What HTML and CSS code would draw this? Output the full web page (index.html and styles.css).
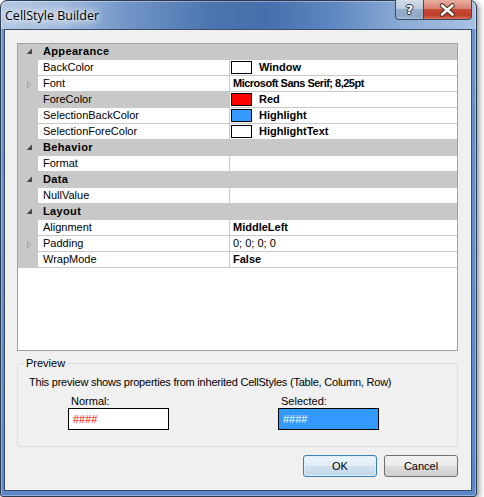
FILE: index.html
```html
<!DOCTYPE html>
<html>
<head>
<meta charset="utf-8">
<title>CellStyle Builder</title>
<link rel="stylesheet" href="styles.css">
</head>
<body>
<div class="window">
  <div class="titlebar">
    <span class="title">CellStyle Builder</span>
    <div class="caption-buttons">
      <div class="cap-btn help">?</div>
      <div class="cap-btn close">
        <svg width="47" height="18" viewBox="0 0 47 18">
          <path d="M18 4.5 L28.5 13.5 M28.5 4.5 L18 13.5" stroke="#4a2a22" stroke-width="4.6" stroke-linecap="round"/>
          <path d="M18 4.5 L28.5 13.5 M28.5 4.5 L18 13.5" stroke="#ffffff" stroke-width="2.6" stroke-linecap="round"/>
        </svg>
      </div>
    </div>
  </div>
  <div class="client">
    <div class="grid">
      <div class="row cat"><span class="gutter"><svg class="glyph" width="20" height="15" viewBox="0 0 20 15"><polygon points="14,4.5 14,10 8.5,10" fill="#4a4a4a"/></svg></span><span class="cat-name">Appearance</span></div>
      <div class="row"><span class="gutter"></span><span class="name">BackColor</span><span class="value swatched"><span class="swatch sw-white"></span><b>Window</b></span></div>
      <div class="row"><span class="gutter"><svg class="glyph" width="20" height="15" viewBox="0 0 20 15"><polygon points="9.5,5.5 13,9 9.5,12.5" fill="none" stroke="#a6a6a6"/></svg></span><span class="name">Font</span><span class="value narrow"><b>Microsoft Sans Serif; 8,25pt</b></span></div>
      <div class="row"><span class="gutter"></span><span class="name selected-name">ForeColor</span><span class="value swatched"><span class="swatch sw-red"></span><b>Red</b></span></div>
      <div class="row"><span class="gutter"></span><span class="name">SelectionBackColor</span><span class="value swatched"><span class="swatch sw-blue"></span><b>Highlight</b></span></div>
      <div class="row"><span class="gutter"></span><span class="name">SelectionForeColor</span><span class="value swatched"><span class="swatch sw-white"></span><b>HighlightText</b></span></div>
      <div class="row cat"><span class="gutter"><svg class="glyph" width="20" height="15" viewBox="0 0 20 15"><polygon points="14,4.5 14,10 8.5,10" fill="#4a4a4a"/></svg></span><span class="cat-name">Behavior</span></div>
      <div class="row"><span class="gutter"></span><span class="name">Format</span><span class="value"></span></div>
      <div class="row cat"><span class="gutter"><svg class="glyph" width="20" height="15" viewBox="0 0 20 15"><polygon points="14,4.5 14,10 8.5,10" fill="#4a4a4a"/></svg></span><span class="cat-name">Data</span></div>
      <div class="row"><span class="gutter"></span><span class="name">NullValue</span><span class="value"></span></div>
      <div class="row cat"><span class="gutter"><svg class="glyph" width="20" height="15" viewBox="0 0 20 15"><polygon points="14,4.5 14,10 8.5,10" fill="#4a4a4a"/></svg></span><span class="cat-name">Layout</span></div>
      <div class="row"><span class="gutter"></span><span class="name">Alignment</span><span class="value"><b>MiddleLeft</b></span></div>
      <div class="row"><span class="gutter"><svg class="glyph" width="20" height="15" viewBox="0 0 20 15"><polygon points="9.5,5.5 13,9 9.5,12.5" fill="none" stroke="#a6a6a6"/></svg></span><span class="name">Padding</span><span class="value">0; 0; 0; 0</span></div>
      <div class="row"><span class="gutter"></span><span class="name">WrapMode</span><span class="value"><b>False</b></span></div>
    </div>
    <fieldset class="preview">
      <legend>Preview</legend>
      <p class="note">This preview shows properties from inherited CellStyles (Table, Column, Row)</p>
      <div class="samples">
        <div class="sample">
          <div class="sample-label">Normal:</div>
          <div class="sample-box normal">####</div>
        </div>
        <div class="sample">
          <div class="sample-label">Selected:</div>
          <div class="sample-box selected">####</div>
        </div>
      </div>
    </fieldset>
    <div class="buttons">
      <button class="btn default">OK</button>
      <button class="btn">Cancel</button>
    </div>
  </div>
</div>
</body>
</html>
```
FILE: styles.css
```css
* { box-sizing: border-box; }
html, body { margin: 0; padding: 0; background: #ffffff; }
body {
  width: 484px;
  height: 497px;
  overflow: hidden;
  font-family: "Liberation Sans", Arial, sans-serif;
  font-size: 11px;
  color: #000;
}
.window {
  width: 477px;
  height: 497px;
  display: flex;
  flex-direction: column;
  border: 1px solid #2c3b50;
  border-radius: 7px 7px 3px 3px;
  padding: 0 4px 5px 3px;
  background:
    linear-gradient(to right, #b3c8e4 0%, #a3bcdd 12%, #7396c8 26%, #4c75af 44%, #466fab 56%, #5f87c1 70%, #8eacd6 85%, #a9c1e2 100%) 0 0 / 100% 28px no-repeat,
    linear-gradient(to bottom, #6b94ce, #5b87c9);
  box-shadow: 2px 2px 6px rgba(0,0,0,0.45), inset 0 0 0 1px rgba(255,255,255,0.35);
}
.titlebar {
  flex: none;
  height: 28px;
  display: flex;
}
.title {
  align-self: center;
  padding-left: 1px;
  margin-top: 1px;
  font-family: "Open Sans", "Noto Sans", sans-serif;
  font-size: 12.5px;
  color: #000;
  text-shadow: 0 0 5px #fff, 0 0 8px #fff, 0 0 12px rgba(255,255,255,0.9);
}
.caption-buttons {
  margin-left: auto;
  margin-top: -1px;
  display: flex;
  height: 20px;
}
.cap-btn {
  height: 20px;
  border: 1px solid #3a4a62;
  border-top: none;
  display: flex;
  align-items: center;
  justify-content: center;
}
.help {
  width: 28px;
  border-right: none;
  border-bottom-left-radius: 4px;
  background: linear-gradient(to bottom, #d3dde9 0%, #bccbde 45%, #98afcc 50%, #8ea8c8 85%, #a9bfdb 100%);
  color: #fff;
  font-family: "DejaVu Sans", sans-serif;
  font-weight: bold;
  font-size: 13px;
  text-shadow: 0 0 1px #1e2a3a, 1px 0 0 #2a3850, -1px 0 0 #2a3850, 0 1px 0 #2a3850, 0 -1px 0 #2a3850;
}
.close {
  width: 49px;
  border-bottom-right-radius: 4px;
  background: linear-gradient(to bottom, #e8b0a2 0%, #d98170 45%, #c64a36 50%, #c03c28 80%, #d9735c 100%);
}
.client {
  flex: 1;
  display: flex;
  flex-direction: column;
  border: 1px solid #3b4e68;
  background: #f0f0f0;
  padding: 13px 13px 0 12px;
}
.grid {
  flex: none;
  width: 441px;
  height: 308px;
  border: 1px solid #a0a0a0;
  background: #fff;
}
.row {
  display: grid;
  grid-template-columns: 20px 192px 227px;
  height: 16px;
  line-height: 15px;
  border-bottom: 1px solid #c8c8c8;
  white-space: nowrap;
}
.row.cat {
  grid-template-columns: 20px 1fr;
  background: #c8c8c8;
}
.gutter {
  background: #c8c8c8;
  height: 15px;
}
.glyph { display: block; }
.cat-name {
  font-weight: bold;
  padding-left: 5px;
  letter-spacing: 0.35px;
}
.name {
  padding-left: 5px;
  border-right: 1px solid #c8c8c8;
}
.selected-name { background: #c8c8c8; }
.value {
  padding-left: 3px;
  overflow: hidden;
}
.value.narrow { letter-spacing: -0.5px; }
.value.swatched {
  display: flex;
  align-items: center;
  padding-left: 1px;
}
.swatch {
  width: 21px;
  height: 13px;
  border: 1px solid #000;
  margin-right: 7px;
  flex: none;
}
.sw-white { background: #fff; }
.sw-red { background: #ff0000; }
.sw-blue { background: #3399ff; }
.preview {
  margin: 6px 0 0 0;
  width: 441px;
  min-width: 0;
  padding: 0 0 16px 0;
  border: 1px solid #d5dfe5;
  border-radius: 3px;
}
.preview legend {
  margin-left: 6px;
  padding: 0 2px;
  line-height: 13px;
}
.note {
  margin: 6px 0 0 11px;
  line-height: 13px;
  white-space: nowrap;
  letter-spacing: -0.22px;
}
.samples {
  display: flex;
  gap: 109px;
  margin: 6px 0 0 50px;
}
.sample-label {
  line-height: 13px;
  padding-left: 3px;
}
.sample-box {
  width: 101px;
  height: 22px;
  border: 1px solid #000;
  padding-left: 4px;
  line-height: 20px;
}
.normal { background: #fff; color: #ff0000; }
.selected { background: #3399ff; color: #fff; }
.buttons {
  display: flex;
  justify-content: flex-end;
  gap: 7px;
  margin-top: 8px;
}
.btn {
  width: 74px;
  height: 22px;
  padding: 0;
  border: 1px solid #707070;
  border-radius: 3px;
  background: linear-gradient(to bottom, #f2f2f2 0%, #ebebeb 50%, #dddddd 50%, #cfcfcf 100%);
  font-family: "Liberation Sans", Arial, sans-serif;
  font-size: 11px;
  color: #000;
}
.btn.default {
  border-color: #3c7fb1;
  box-shadow: inset 0 0 0 1px #d8eefb;
  background: linear-gradient(to bottom, #eef5fb 0%, #e1ecf5 50%, #d0e1ef 50%, #c4d8ea 100%);
}
```
